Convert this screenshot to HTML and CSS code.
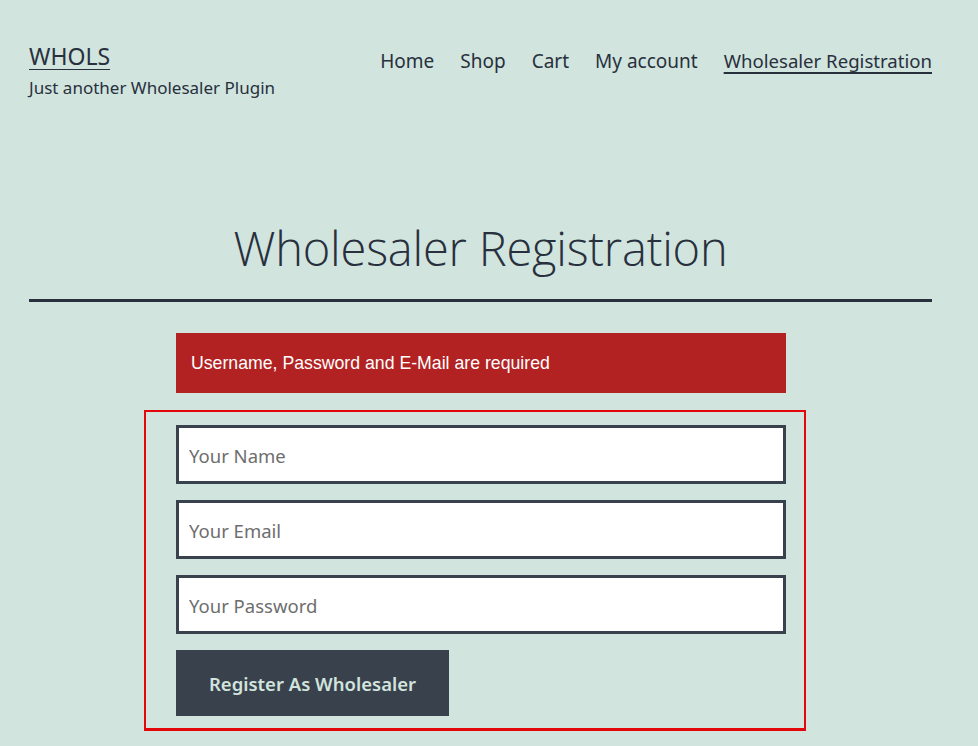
FILE: index.html
```html
<!DOCTYPE html>
<html lang="en">
<head>
<meta charset="utf-8">
<title>Wholesaler Registration – WHOLS</title>
<link rel="stylesheet" href="styles.css">
</head>
<body>
<header class="site-header">
  <div class="branding">
    <a class="site-title" href="#">WHOLS</a>
    <p class="tagline">Just another Wholesaler Plugin</p>
  </div>
  <nav class="menu">
    <a href="#">Home</a>
    <a href="#">Shop</a>
    <a href="#">Cart</a>
    <a href="#">My account</a>
    <a href="#" class="current">Wholesaler Registration</a>
  </nav>
</header>
<main class="content">
  <h1 class="page-title">Wholesaler Registration</h1>
  <hr class="rule">
  <div class="notice">Username, Password and E-Mail are required</div>
  <form class="reg-form">
    <input type="text" class="field" placeholder="Your Name">
    <input type="email" class="field" placeholder="Your Email">
    <input type="password" class="field" placeholder="Your Password">
    <button type="button" class="submit">Register As Wholesaler</button>
  </form>
</main>
</body>
</html>
```

FILE: styles.css
```css
html, body {
  margin: 0;
  padding: 0;
}
body {
  background: #d1e4dd;
  color: #28303d;
  font-family: "Noto Sans", "Open Sans", sans-serif;
  width: 978px;
  height: 746px;
  overflow: hidden;
}
a { color: #28303d; }

.site-header {
  display: flex;
  justify-content: space-between;
  align-items: flex-start;
  padding: 40px 46px 0 29px;
}
.site-title {
  font-size: 23px;
  line-height: 32px;
  text-decoration: underline;
  text-underline-offset: 4px;
  text-decoration-thickness: 1px;
}
.tagline {
  margin: 4px 0 0;
  font-size: 17px;
  line-height: 24px;
}
.menu {
  display: flex;
  gap: 26px;
  padding-top: 7px;
}
.menu a {
  font-size: 19px;
  line-height: 28px;
  text-decoration: none;
}
.menu a.current {
  font-size: 18.6px;
  text-decoration: underline;
  text-underline-offset: 4px;
  text-decoration-thickness: 2px;
}

.content {
  width: 903px;
  margin: 0 0 0 29px;
}
.page-title {
  margin: 115px 0 0;
  text-align: center;
  font-family: "Open Sans", "Noto Sans", sans-serif;
  font-weight: 300;
  font-size: 47px;
  line-height: 66px;
  letter-spacing: -0.2px;
}
.rule {
  margin: 18px 0 0;
  border: 0;
  border-top: 3px solid #28303d;
  height: 0;
}
.notice {
  width: 595px;
  margin: 31px 0 0 147px;
  padding: 0 0 0 15px;
  height: 60px;
  display: flex;
  align-items: center;
  background: #b22222;
  color: #ffffff;
  font-family: "Liberation Sans", Arial, sans-serif;
  font-size: 17.7px;
}
.reg-form {
  margin: 17px 0 0 115px;
  width: 610px;
  padding: 13px 18px 12px 30px;
  border: 2px solid #e3060b;
  border-bottom-width: 3px;
  display: flex;
  flex-direction: column;
  align-items: flex-start;
  gap: 16px;
}
.field {
  box-sizing: border-box;
  width: 610px;
  height: 59px;
  border: 3px solid #39414d;
  background: #ffffff;
  padding: 2px 10px 0;
  font-family: inherit;
  font-size: 18.5px;
  color: #28303d;
  outline: none;
  border-radius: 0;
}
.field::placeholder {
  color: #6e6e6e;
  opacity: 1;
}
.submit {
  height: 66px;
  width: 273px;
  border: 0;
  background: #39414d;
  color: #d1e4dd;
  font-family: inherit;
  font-size: 18.5px;
  font-weight: 600;
  cursor: pointer;
  border-radius: 0;
}
```
